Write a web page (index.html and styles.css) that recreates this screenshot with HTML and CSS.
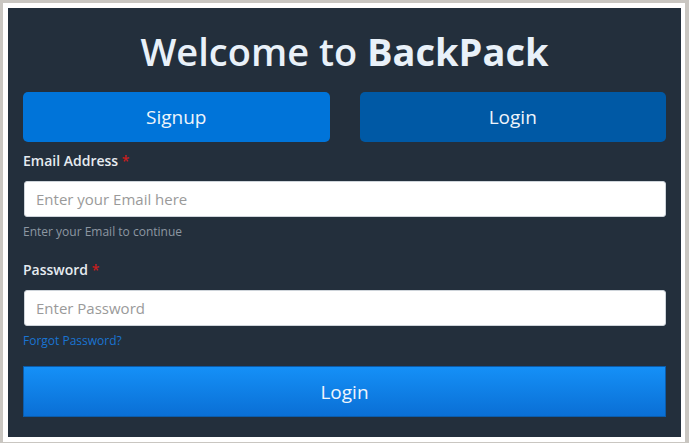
FILE: index.html
```html
<!DOCTYPE html>
<html lang="en">
<head>
<meta charset="utf-8">
<title>BackPack</title>
<link rel="stylesheet" href="styles.css">
</head>
<body>
<div class="frame">
  <main class="panel">
    <h1 class="title">Welcome to <span class="brand">BackPack</span></h1>
    <div class="tabs">
      <button class="tab tab-signup" type="button">Signup</button>
      <button class="tab tab-login" type="button">Login</button>
    </div>
    <form class="form">
      <div class="field">
        <label class="label">Email Address <span class="req">*</span></label>
        <input class="input" type="email" placeholder="Enter your Email here">
        <small class="help">Enter your Email to continue</small>
      </div>
      <div class="field field-pw">
        <label class="label">Password <span class="req">*</span></label>
        <input class="input" type="password" placeholder="Enter Password">
        <a class="forgot" href="#">Forgot Password?</a>
      </div>
      <button class="submit" type="button">Login</button>
    </form>
  </main>
</div>
</body>
</html>
```

FILE: styles.css
```css
html, body {
  margin: 0;
  height: 100%;
}
body {
  background: #c9c6c1;
  padding: 3px 4px 1px 3px;
  box-sizing: border-box;
  font-family: "Open Sans", "Noto Sans", sans-serif;
}
.frame {
  background: #ffffff;
  padding: 5px 4px 5px 5px;
  height: 100%;
  box-sizing: border-box;
}
.panel {
  background: #232f3c;
  height: 100%;
  box-sizing: border-box;
  padding: 20px 15px 20px 15px;
  display: flex;
  flex-direction: column;
}
.title {
  margin: 0;
  text-align: center;
  color: #e9f1f9;
  font-size: 38px;
  font-weight: 600;
  line-height: 46px;
}
.brand {
  font-weight: 700;
}
.tabs {
  display: flex;
  gap: 30px;
  margin-top: 18px;
}
.tab {
  flex: 1;
  height: 50px;
  border: none;
  border-radius: 5px;
  color: #eef4fb;
  font-family: inherit;
  font-size: 19px;
}
.tab-signup { background: #0074d9; }
.tab-login { background: #0059a5; }
.form {
  display: flex;
  flex-direction: column;
}
.field {
  display: flex;
  flex-direction: column;
}
.label {
  color: #e6ebf0;
  font-size: 14px;
  font-weight: 600;
  line-height: 20px;
  margin-top: 9px;
  margin-bottom: 10px;
}
.req { color: #c81e1e; }
.input {
  height: 36px;
  box-sizing: border-box;
  border: 1px solid #ced4da;
  border-radius: 3px;
  padding: 0 11px;
  font-family: inherit;
  font-size: 15px;
  background: #fff;
  margin-left: 1px;
}
.input::placeholder { color: #9a9a9a; }
.help {
  color: #8d97a2;
  font-size: 12px;
  line-height: 16px;
  margin-top: 7px;
}
.field-pw .label { margin-top: 20px; }
.forgot {
  color: #1a74d2;
  font-size: 12px;
  line-height: 16px;
  margin-top: 7px;
  text-decoration: none;
}
.submit {
  margin-top: 17px;
  height: 51px;
  border: 1px solid #0b5cab;
  border-radius: 0;
  background: linear-gradient(#1590f7, #0a6fd5);
  color: #f1f6fc;
  font-family: inherit;
  font-size: 19px;
}
```
